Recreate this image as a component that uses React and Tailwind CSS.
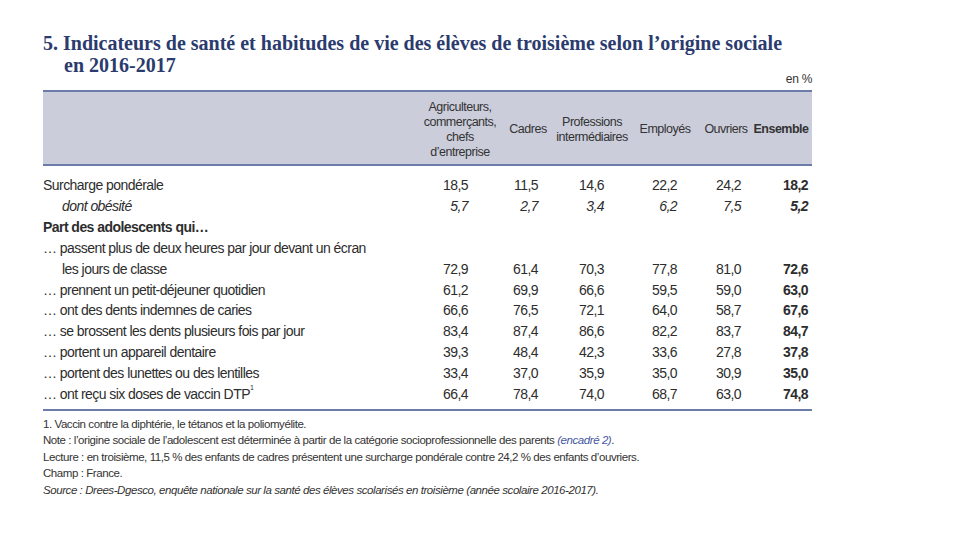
import React from "react";

const rows = [
  { label: "Surcharge pondérale", values: ["18,5", "11,5", "14,6", "22,2", "24,2", "18,2"] },
  { label: "dont obésité", values: ["5,7", "2,7", "3,4", "6,2", "7,5", "5,2"], italic: true },
  { label: "Part des adolescents qui…", heading: true },
  {
    label: "… passent plus de deux heures par jour devant un écran",
    second: "les jours de classe",
    values: ["72,9", "61,4", "70,3", "77,8", "81,0", "72,6"],
  },
  { label: "… prennent un petit-déjeuner quotidien", values: ["61,2", "69,9", "66,6", "59,5", "59,0", "63,0"] },
  { label: "… ont des dents indemnes de caries", values: ["66,6", "76,5", "72,1", "64,0", "58,7", "67,6"] },
  { label: "… se brossent les dents plusieurs fois par jour", values: ["83,4", "87,4", "86,6", "82,2", "83,7", "84,7"] },
  { label: "… portent un appareil dentaire", values: ["39,3", "48,4", "42,3", "33,6", "27,8", "37,8"] },
  { label: "… portent des lunettes ou des lentilles", values: ["33,4", "37,0", "35,9", "35,0", "30,9", "35,0"] },
  { label: "… ont reçu six doses de vaccin DTP", sup: "1", values: ["66,4", "78,4", "74,0", "68,7", "63,0", "74,8"] },
];

// column widths + right padding for the numbers
const cols = [
  { w: "w-[80px]", pr: "pr-[32px]" },
  { w: "w-[56px]", pr: "pr-[18px]" },
  { w: "w-[72px]", pr: "pr-[24px]" },
  { w: "w-[74px]", pr: "pr-[25px]" },
  { w: "w-[48px]", pr: "pr-[9px]" },
  { w: "w-[62px]", pr: "pr-[4px]" },
];

const body = "font-['Liberation_Sans',Arial,sans-serif]";

export default function App() {
  return (
    <div className="w-[960px] h-[540px] bg-white overflow-hidden">
      <div className="pl-[43px] pr-[148px] pt-[32px]">
        {/* Title */}
        <h1 className="font-['Liberation_Serif',serif] font-bold text-[20px] leading-[22px] text-[#2b3b6e]">
          <div>5. Indicateurs de santé et habitudes de vie des élèves de troisième selon l’origine sociale</div>
          <div className="pl-[21px]">en 2016-2017</div>
        </h1>

        <div className={`${body} text-right text-[12px] leading-[12px] tracking-[-0.3px] text-[#333] -mt-[3px]`}>en %</div>

        {/* Table */}
        <div className={`${body} text-[#2d2d2d] mt-[5px]`}>
          {/* Header */}
          <div className="flex items-center bg-[#cbcddb] border-t-2 border-b-2 border-[#6b7ca8] h-[76px] pt-[3px] text-[12.5px] leading-[15px] tracking-[-0.5px] text-[#333]">
            <div className="flex-1" />
            <div className={`${cols[0].w} text-center`}>
              Agriculteurs,<br />commerçants,<br />chefs<br />d’entreprise
            </div>
            <div className={`${cols[1].w} text-center`}>Cadres</div>
            <div className={`${cols[2].w} text-center`}>
              Professions<br />intermédiaires
            </div>
            <div className={`${cols[3].w} text-center`}>Employés</div>
            <div className={`${cols[4].w} text-center`}>Ouvriers</div>
            <div className={`${cols[5].w} text-center font-bold`}>Ensemble</div>
          </div>

          {/* Body */}
          <div className="pt-[9px] pb-[4px] border-b-2 border-[#6b7ca8] text-[14px] leading-[20.9px] tracking-[-0.55px]">
            {rows.map((r, i) => (
              <div key={i} className={`flex ${r.second ? "items-end" : "items-center"}`}>
                <div className={`flex-1 ${r.italic ? "italic pl-[19px]" : ""} ${r.heading ? "font-bold" : ""}`}>
                  <div>
                    {r.label}
                    {r.sup && <sup className="text-[7px] align-super">{r.sup}</sup>}
                  </div>
                  {r.second && <div className="pl-[19px]">{r.second}</div>}
                </div>
                {r.values &&
                  r.values.map((v, j) => (
                    <div
                      key={j}
                      className={`${cols[j].w} ${cols[j].pr} text-right ${j === 5 ? "font-bold" : ""} ${
                        r.italic ? "italic" : ""
                      }`}
                    >
                      {v}
                    </div>
                  ))}
              </div>
            ))}
          </div>
        </div>

        {/* Notes */}
        <div className={`${body} text-[11.5px] leading-[16.5px] tracking-[-0.43px] text-[#333] pt-[5px]`}>
          <div>1. Vaccin contre la diphtérie, le tétanos et la poliomyélite.</div>
          <div>
            Note : l’origine sociale de l’adolescent est déterminée à partir de la catégorie socioprofessionnelle des parents{" "}
            <span className="italic text-[#4657a0]">(encadré 2)</span>.
          </div>
          <div>
            Lecture : en troisième, 11,5 % des enfants de cadres présentent une surcharge pondérale contre 24,2 % des enfants d’ouvriers.
          </div>
          <div>Champ : France.</div>
          <div className="italic">
            Source : Drees-Dgesco, enquête nationale sur la santé des élèves scolarisés en troisième (année scolaire 2016-2017).
          </div>
        </div>
      </div>
    </div>
  );
}
